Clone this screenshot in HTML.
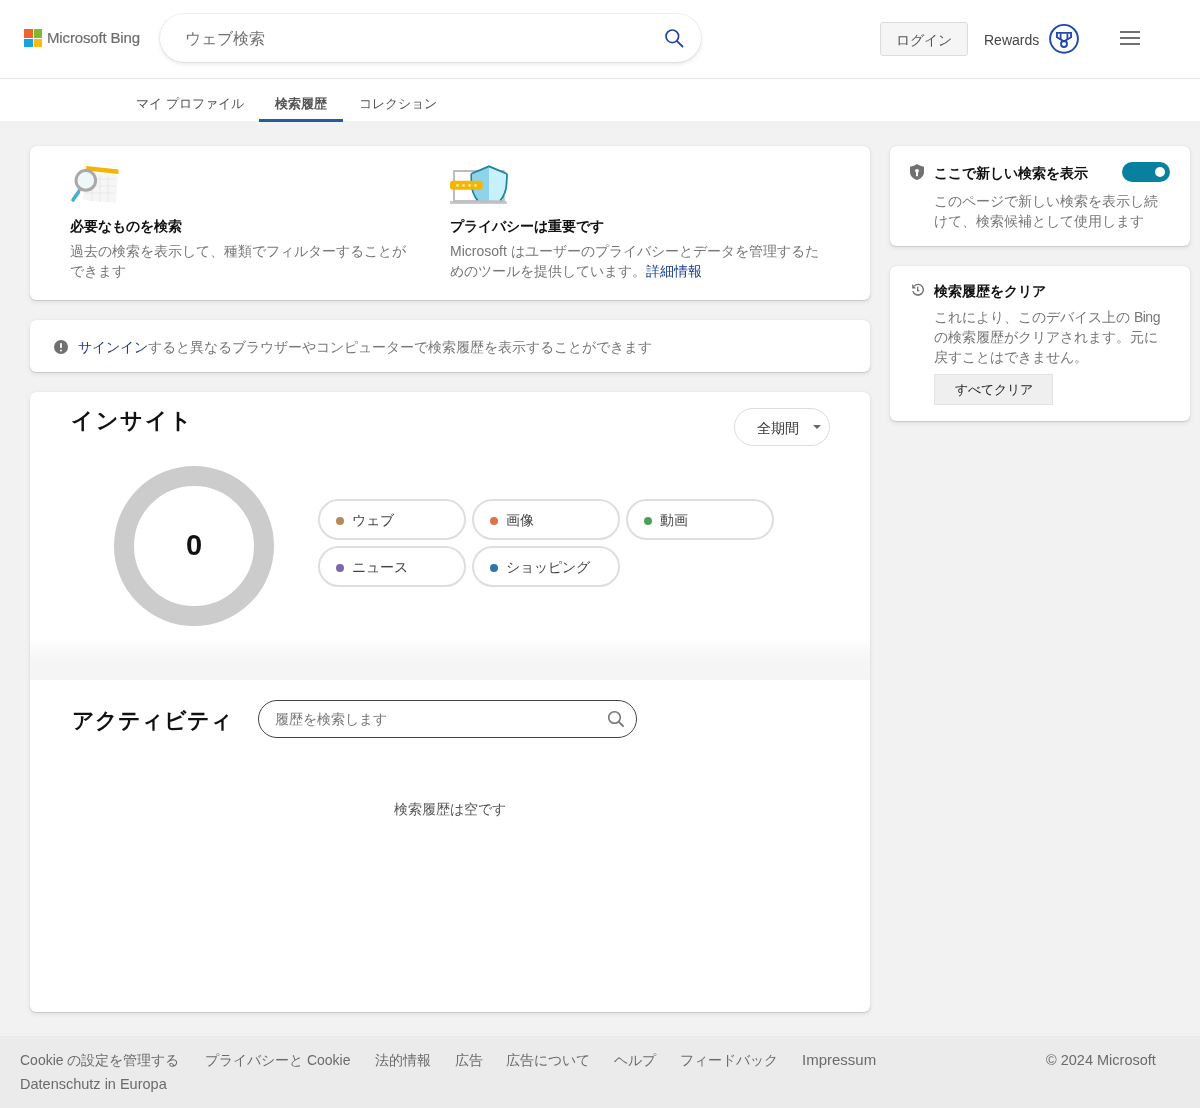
<!DOCTYPE html>
<html lang="ja">
<head>
<meta charset="utf-8">
<style>
*{box-sizing:border-box;margin:0;padding:0}
html,body{width:1200px;height:1108px;overflow:hidden}
body{background:#f2f2f2;font-family:"Liberation Sans",sans-serif;color:#444;position:relative}
.abs{position:absolute}
#hdr{left:0;top:0;width:1200px;height:79px;background:#fff;border-bottom:1px solid #e6e6e6}
#tabs{left:0;top:79px;width:1200px;height:42px;background:#fff}
.logo-sq{position:absolute;width:8.5px;height:8.5px}
.txt{white-space:nowrap}
.card{position:absolute;background:#fff;border-radius:6px;box-shadow:0 0 1px rgba(0,0,0,.18),0 1px 1px rgba(0,0,0,.1),0 2px 5px rgba(0,0,0,.09)}
.chip{position:absolute;width:148px;height:41px;border:2px solid #dedede;border-radius:21px;background:#fff}
.chip .dot{position:absolute;left:16px;top:16px;width:8px;height:8px;border-radius:50%}
.chip .lbl{position:absolute;left:32px;top:9px;font-size:14px;line-height:20px;color:#444;white-space:nowrap}
#footer{left:0;top:1036px;width:1200px;height:72px;background:#ebebeb}
.fl{position:absolute;top:14px;font-size:14px;color:#6b6b6b;white-space:nowrap;line-height:20px}
.ttl{position:absolute;white-space:nowrap;font-size:14px;line-height:20px;color:#111;font-weight:bold}
.dsc{position:absolute;font-size:14px;line-height:20px;color:#777}
</style>
</head>
<body><div style="position:absolute;left:0;top:0;width:1200px;height:1108px;will-change:transform;">
<!-- header -->
<div id="hdr" class="abs">
  <div class="logo-sq" style="left:24px;top:29px;background:#ea6530"></div>
  <div class="logo-sq" style="left:33.5px;top:29px;background:#7cba2e"></div>
  <div class="logo-sq" style="left:24px;top:38.5px;background:#17a2e0"></div>
  <div class="logo-sq" style="left:33.5px;top:38.5px;background:#f9bd12"></div>
  <div class="abs txt" style="left:47px;top:29px;font-size:15px;line-height:18px;color:#6e6e6e;letter-spacing:-0.15px;-webkit-text-stroke:0.2px #6e6e6e">Microsoft Bing</div>
  <div class="abs" style="left:160px;top:14px;width:541px;height:48px;border-radius:24px;background:#fff;box-shadow:0 0 0 1px rgba(0,0,0,.05),0 2px 4px rgba(0,0,0,.1)"></div>
  <div class="abs txt" style="left:185px;top:28px;font-size:16px;line-height:22px;color:#717171">ウェブ検索</div>
  <svg class="abs" style="left:660px;top:24px" width="26" height="26" viewBox="0 0 26 26"><circle cx="12.3" cy="12.3" r="6.3" fill="none" stroke="#24459b" stroke-width="1.7"/><path d="M16.8 16.8 L22.5 22.5" stroke="#24459b" stroke-width="1.8" stroke-linecap="round"/></svg>
  <div class="abs" style="left:880px;top:22px;width:88px;height:34px;background:#f5f5f5;border:1px solid #ddd;border-radius:3px"></div>
  <div class="abs txt" style="left:896px;top:30px;font-size:14px;line-height:20px;color:#555">ログイン</div>
  <div class="abs txt" style="left:984px;top:30px;font-size:14px;line-height:20px;color:#444">Rewards</div>
  <svg class="abs" style="left:1048px;top:23px" width="32" height="32" viewBox="0 0 32 32"><circle cx="16" cy="15.8" r="13.9" fill="none" stroke="#2148ab" stroke-width="1.9"/><path d="M8.9 9.9 H23.1 V14.3 L16 18.3 L8.9 14.3 Z" fill="none" stroke="#2148ab" stroke-width="1.9" stroke-linejoin="miter"/><path d="M12.6 10.5 V16.3 M19.4 10.5 V16.3" stroke="#2148ab" stroke-width="1.8"/><circle cx="16" cy="21" r="3" fill="none" stroke="#2148ab" stroke-width="1.9"/></svg>
  <div class="abs" style="left:1120px;top:31px;width:20px;height:2px;background:#717171"></div>
  <div class="abs" style="left:1120px;top:37px;width:20px;height:2px;background:#717171"></div>
  <div class="abs" style="left:1120px;top:43px;width:20px;height:2px;background:#717171"></div>
</div>
<div id="tabs" class="abs">
  <div class="abs txt" style="left:136px;top:15px;font-size:13px;line-height:20px;color:#555">マイ プロファイル</div>
  <div class="abs txt" style="left:275px;top:15px;font-size:13px;line-height:20px;color:#555;font-weight:bold">検索履歴</div>
  <div class="abs txt" style="left:359px;top:15px;font-size:13px;line-height:20px;color:#555">コレクション</div>
  <div class="abs" style="left:259px;top:40px;width:84px;height:3px;background:#1e5f9c;z-index:2"></div>
</div>

<!-- card 1 -->
<div class="card" style="left:30px;top:146px;width:840px;height:154px">
  <svg class="abs" style="left:38px;top:17px" width="54" height="42" viewBox="38 17 54 42">
    <path d="M55 26 L88 29 L86 57 L53 54 Z" fill="#f6f6f6"/>
    <path d="M57 33 H85 M56 40 H85 M55 47 H85 M62 29 V55 M70 29 V56 M78 30 V56" stroke="#e9e9e9" stroke-width="1.2"/>
    <path d="M56.3 20 L88.6 23.5 L88.4 28 L56 24.5 Z" fill="#f4b400"/>
    <circle cx="55.8" cy="34.4" r="9.8" fill="#f0f7f9" stroke="#a9a9a9" stroke-width="3"/>
    <path d="M50 43 L48.5 45" stroke="#a9a9a9" stroke-width="3"/>
    <path d="M48.5 46 L43 54" stroke="#45b0cf" stroke-width="3.6" stroke-linecap="round"/>
  </svg>
  <div class="ttl" style="left:40px;top:70px">必要なものを検索</div>
  <div class="dsc" style="left:40px;top:95px;width:342px">過去の検索を表示して、種類でフィルターすることができます</div>
  <svg class="abs" style="left:418px;top:18px" width="62" height="40" viewBox="418 18 62 40">
    <rect x="424" y="25" width="49.7" height="30.3" fill="#fff" stroke="#bdbdbd" stroke-width="2"/>
    <rect x="420" y="55" width="56.7" height="3" fill="#c9c9c9"/>
    <path d="M459 21.3 L442.5 28 L442.3 38 Q443 48 448.5 55 L459 55 Z" fill="#8fd3ea"/>
    <path d="M459 21.3 L475.5 28 L475.7 38 Q475 48 469.5 55 L459 55 Z" fill="#c9f1fb"/>
    <path d="M448 54.8 Q442 48 441.5 38 L441.3 29 Q441.3 28 442 27.5 L459 20.3 L476.2 27.5 Q477 28 477 29 L476.5 38 Q476 48 470 54.8" fill="none" stroke="#1a86a0" stroke-width="1.8"/>
    <rect x="423" y="54.3" width="51.7" height="2" fill="#bdbdbd"/>
    <rect x="420" y="34.7" width="32.7" height="9" rx="3" fill="#f7b500"/>
    <circle cx="427.5" cy="39.4" r="1.4" fill="#fff3a0"/><circle cx="433.5" cy="39.4" r="1.4" fill="#fff3a0"/><circle cx="439.5" cy="39.4" r="1.4" fill="#fff3a0"/><circle cx="445.5" cy="39.4" r="1.4" fill="#fff3a0"/>
  </svg>
  <div class="ttl" style="left:420px;top:70px">プライバシーは重要です</div>
  <div class="dsc" style="left:420px;top:95px;width:378px">Microsoft はユーザーのプライバシーとデータを管理するためのツールを提供しています。<span style="color:#1a3d8f">詳細情報</span></div>
</div>

<!-- card 2 -->
<div class="card" style="left:30px;top:320px;width:840px;height:52px">
  <svg class="abs" style="left:24px;top:20px" width="14" height="14" viewBox="0 0 14 14"><circle cx="7" cy="7" r="7" fill="#707070"/><rect x="6.1" y="3" width="1.8" height="5" rx=".5" fill="#fff"/><circle cx="7" cy="10.4" r="1" fill="#fff"/></svg>
  <div class="abs txt" style="left:48px;top:17px;font-size:14px;line-height:20px;color:#777"><span style="color:#1b3a8c">サインイン</span>すると異なるブラウザーやコンピューターで検索履歴を表示することができます</div>
</div>

<!-- card 3 -->
<div class="card" style="left:30px;top:392px;width:840px;height:620px">
  <div class="abs txt" style="left:41px;top:13px;font-size:22px;line-height:32px;color:#111;font-weight:bold;letter-spacing:1.5px">インサイト</div>
  <div class="abs" style="left:704px;top:16px;width:96px;height:38px;border:1px solid #ddd;border-radius:19px"></div>
  <div class="abs txt" style="left:727px;top:26px;font-size:14px;line-height:20px;color:#333">全期間</div>
  <div class="abs" style="left:783px;top:33px;width:0;height:0;border-left:4px solid transparent;border-right:4px solid transparent;border-top:4px solid #666"></div>
  <div class="abs" style="left:84px;top:74px;width:160px;height:160px;border-radius:50%;border:20px solid #cccccc"></div>
  <div class="abs txt" style="left:134px;top:136px;width:60px;text-align:center;font-size:29px;line-height:34px;color:#111;font-weight:bold">0</div>
  <div class="chip" style="left:288px;top:107px"><div class="dot" style="background:#b38b59"></div><div class="lbl">ウェブ</div></div>
  <div class="chip" style="left:442px;top:107px"><div class="dot" style="background:#e0714b"></div><div class="lbl">画像</div></div>
  <div class="chip" style="left:596px;top:107px"><div class="dot" style="background:#4da05a"></div><div class="lbl">動画</div></div>
  <div class="chip" style="left:288px;top:154px"><div class="dot" style="background:#7a69a8"></div><div class="lbl">ニュース</div></div>
  <div class="chip" style="left:442px;top:154px"><div class="dot" style="background:#2a77a8"></div><div class="lbl">ショッピング</div></div>
  <div class="abs" style="left:0;top:244px;width:840px;height:44px;background:linear-gradient(#fff 0px,#fff 2px,#fbfbfb 10px,#f6f6f6 24px,#f5f5f5 44px)"></div>
  <div class="abs txt" style="left:42px;top:313px;font-size:22px;line-height:32px;color:#111;font-weight:bold">アクティビティ</div>
  <div class="abs" style="left:228px;top:308px;width:379px;height:38px;border:1px solid #444;border-radius:19px"></div>
  <div class="abs txt" style="left:245px;top:317px;font-size:14px;line-height:20px;color:#767676">履歴を検索します</div>
  <svg class="abs" style="left:577px;top:318px" width="18" height="18" viewBox="0 0 18 18"><circle cx="7.5" cy="7.5" r="5.8" fill="none" stroke="#777" stroke-width="1.6"/><path d="M11.8 11.8 L16 16" stroke="#777" stroke-width="1.8" stroke-linecap="round"/></svg>
  <div class="abs txt" style="left:0;top:407px;width:840px;text-align:center;font-size:14px;line-height:20px;color:#555">検索履歴は空です</div>
</div>

<!-- right cards -->
<div class="card" style="left:890px;top:146px;width:300px;height:100px">
  <svg class="abs" style="left:19px;top:17px" width="16" height="18" viewBox="0 0 16 18"><path d="M8 1 C10 2.3 12.5 3.3 15 3.8 V9 C15 13 12 15.8 8 17 C4 15.8 1 13 1 9 V3.8 C3.5 3.3 6 2.3 8 1 Z" fill="#717171"/><circle cx="8" cy="7.8" r="1.9" fill="#fff"/><rect x="7" y="8.5" width="2" height="4.7" fill="#fff"/></svg>
  <div class="ttl" style="left:44px;top:17px">ここで新しい検索を表示</div>
  <div class="abs" style="left:232px;top:16px;width:48px;height:20px;border-radius:10px;background:#0881a0"></div>
  <div class="abs" style="left:265px;top:21px;width:10px;height:10px;border-radius:50%;background:#fff"></div>
  <div class="dsc" style="left:44px;top:45px;width:230px">このページで新しい検索を表示し続けて、検索候補として使用します</div>
</div>
<div class="card" style="left:890px;top:266px;width:300px;height:155px">
  <svg class="abs" style="left:14px;top:12px" width="26" height="26" viewBox="0 0 26 26"><path d="M8.88 13.07 A5.3 5.3 0 1 0 10.25 7.95" fill="none" stroke="#717171" stroke-width="1.4"/><path d="M8.2 6 L8.2 10.6 L12 10.6 Z" fill="#717171"/><path d="M13 8.8 H14.3 V11.8 L16 13.3 H13 Z" fill="#717171"/></svg>
  <div class="ttl" style="left:44px;top:15px">検索履歴をクリア</div>
  <div class="dsc" style="left:44px;top:41px;width:234px">これにより、このデバイス上の <span style="letter-spacing:-0.5px">Bing</span> の検索履歴がクリアされます。元に戻すことはできません。</div>
  <div class="abs" style="left:44px;top:108px;width:119px;height:31px;background:#efefef;border:1px solid #e2e2e2"></div>
  <div class="abs txt" style="left:44px;top:114px;width:119px;text-align:center;font-size:13px;line-height:20px;color:#222">すべてクリア</div>
</div>

<!-- footer -->
<div id="footer" class="abs">
  <div class="fl" style="left:20px">Cookie の設定を管理する</div>
  <div class="fl" style="left:205px">プライバシーと Cookie</div>
  <div class="fl" style="left:375px">法的情報</div>
  <div class="fl" style="left:455px">広告</div>
  <div class="fl" style="left:506px">広告について</div>
  <div class="fl" style="left:614px">ヘルプ</div>
  <div class="fl" style="left:680px">フィードバック</div>
  <div class="fl" style="left:802px;font-size:15px">Impressum</div>
  <div class="fl" style="left:1046px;font-size:14.5px">© 2024 Microsoft</div>
  <div class="fl" style="left:20px;top:38px;font-size:14.5px">Datenschutz in Europa</div>
</div>
</div></body>
</html>
